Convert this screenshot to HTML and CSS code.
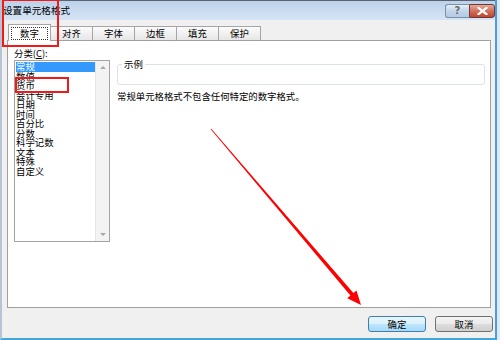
FILE: index.html
```html
<!DOCTYPE html>
<html lang="zh-CN">
<head>
<meta charset="utf-8">
<title>设置单元格格式</title>
<link rel="stylesheet" href="styles.css">
</head>
<body>
<div class="window">
  <div class="titlebar">
    <span class="title">设置单元格格式</span>
    <div class="caption">
      <span class="cap-help">?</span>
      <span class="cap-close"><svg width="11" height="8" viewBox="0 0 11 8"><path d="M1.5 0.8 L9.5 7.2 M9.5 0.8 L1.5 7.2" stroke="#fff" stroke-width="2.2" stroke-linecap="square"/></svg></span>
    </div>
  </div>
  <div class="tabs">
    <div class="tab active"><span class="focus">数字</span></div>
    <div class="tab">对齐</div>
    <div class="tab">字体</div>
    <div class="tab">边框</div>
    <div class="tab">填充</div>
    <div class="tab">保护</div>
  </div>
  <div class="panel">
    <div class="left">
      <div class="label">分类(<u>C</u>):</div>
      <div class="listbox">
        <ul class="items">
          <li class="sel">常规</li>
          <li>数值</li>
          <li>货币</li>
          <li>会计专用</li>
          <li>日期</li>
          <li>时间</li>
          <li>百分比</li>
          <li>分数</li>
          <li>科学记数</li>
          <li>文本</li>
          <li>特殊</li>
          <li>自定义</li>
        </ul>
        <div class="scrollbar">
          <span class="arr up"></span>
          <span class="arr down"></span>
        </div>
      </div>
    </div>
    <div class="right">
      <div class="sample"><span class="sample-label">示例</span></div>
      <p class="desc">常规单元格格式不包含任何特定的数字格式。</p>
    </div>
  </div>
  <div class="footer">
    <button class="btn default">确定</button>
    <button class="btn">取消</button>
  </div>
</div>
<div class="mark mark-tab"></div>
<div class="mark mark-item"></div>
<svg class="arrow" width="500" height="340" viewBox="0 0 500 340">
  <polygon points="211.3,128.7 353.4,293.0 356.5,290.4 361,305 347.3,298.2 350.4,295.6 210.7,129.3" fill="#ff0000"/>
</svg>
</body>
</html>
```
FILE: styles.css
```css
body {
  margin: 0;
  background: #dfe9f4;
  font-family: "Noto Sans CJK SC", "Noto Sans", sans-serif;
  font-size: 9.4px;
  color: #000;
}

.window {
  width: 497px;
  height: 340px;
  box-sizing: border-box;
  border-left: 2px solid #b6c5d6;
  border-right: 2px solid #4a9fd8;
  border-bottom: 2px solid #45a5d8;
  background: #f0f0f0;
  display: flex;
  flex-direction: column;
}

.titlebar {
  height: 20px;
  box-sizing: border-box;
  border-top: 1px solid #5a6470;
  background: linear-gradient(#bcd1e9, #d6e5f5);
  display: flex;
  align-items: flex-start;
  padding-left: 1px;
}

.title {
  line-height: 19px;
  font-size: 9.6px;
}

.caption {
  margin-left: auto;
  margin-top: 3px;
  display: flex;
}

.cap-help {
  width: 24px;
  height: 14px;
  box-sizing: border-box;
  border: 1px solid #7b8fa7;
  border-right: none;
  border-radius: 3px 0 0 3px;
  background: linear-gradient(#e6eff9, #c2d4ea 50%, #b3c9e3);
  color: #6b6b6b;
  font: bold 10px "DejaVu Sans", sans-serif;
  text-align: center;
  line-height: 12px;
}

.cap-close {
  width: 26px;
  height: 14px;
  box-sizing: border-box;
  border: 1px solid #6e3b34;
  border-radius: 0 3px 3px 0;
  background: linear-gradient(#e9a797, #d0705d 50%, #c3432e);
  display: flex;
  align-items: center;
  justify-content: center;
}

.tabs {
  display: flex;
  align-items: flex-end;
  height: 16px;
  margin: 4px 0 0 6px;
}

.tab {
  width: 43px;
  height: 14px;
  box-sizing: border-box;
  border: 1px solid #a5a5a5;
  border-bottom: none;
  background: linear-gradient(#fbfbfb, #e6e6e6);
  margin-left: -1px;
  text-align: center;
  line-height: 13px;
}

.tab.active {
  height: 17px;
  margin-left: 0;
  margin-bottom: -1px;
  background: #fff;
  position: relative;
  z-index: 1;
  padding-top: 2px;
}

.focus {
  display: block;
  margin: 0 2px;
  border: 1px dotted #333;
  line-height: 11px;
}

.panel {
  margin: 0 4px 0 5px;
  height: 268px;
  box-sizing: border-box;
  border: 1px solid #a0a0a0;
  background: #fff;
  display: flex;
  gap: 7px;
  padding: 5px 5px 0 6px;
}

.left {
  width: 96px;
  flex: none;
}

.label {
  line-height: 14px;
}

.listbox {
  height: 182px;
  box-sizing: border-box;
  border: 1px solid #a4a4a4;
  display: flex;
}

.items {
  flex: 1;
  list-style: none;
  margin: 0;
  padding: 1px 0 0 1px;
}

.items li {
  height: 9.5px;
  line-height: 9.5px;
  white-space: nowrap;
}

.items li.sel {
  background: #3399ff;
  color: #fff;
}

.scrollbar {
  width: 13px;
  background: #f3f3f3;
  border-left: 1px solid #e6e6e6;
  display: flex;
  flex-direction: column;
  justify-content: space-between;
  align-items: center;
  padding: 5px 0 5px;
}

.arr {
  width: 0;
  height: 0;
  border-left: 3px solid transparent;
  border-right: 3px solid transparent;
}

.arr.up {
  border-bottom: 3px solid #a8a8a8;
}

.arr.down {
  border-top: 3px solid #a8a8a8;
}

.right {
  flex: 1;
}

.sample {
  margin-top: 18px;
  height: 21px;
  box-sizing: border-box;
  border: 1px solid #dbe3e8;
  border-radius: 3px;
  position: relative;
}

.sample-label {
  position: absolute;
  top: -6px;
  left: 4px;
  padding: 0 2px;
  background: #fff;
  line-height: 11px;
}

.desc {
  margin: 5px 0 0;
  line-height: 12px;
}

.footer {
  display: flex;
  justify-content: flex-end;
  gap: 9px;
  margin-top: 8px;
  padding-right: 2px;
}

.btn {
  width: 58px;
  height: 16px;
  box-sizing: border-box;
  border: 1px solid #707070;
  border-radius: 3px;
  background: linear-gradient(#f3f3f3, #ebebeb 50%, #dddddd 51%, #cfcfcf);
  font: inherit;
  color: #000;
  padding: 0;
  line-height: 14px;
}

.btn.default {
  border-color: #3c7fb1;
  background: linear-gradient(#eaf6fd, #d9f0fc 50%, #bee6fd 51%, #a7d9f5);
}

.mark {
  position: absolute;
  box-sizing: border-box;
  border: 2px solid #f01a1a;
}

.mark-tab {
  left: 2px;
  top: -1px;
  width: 57px;
  height: 48px;
}

.mark-item {
  left: 15px;
  top: 77px;
  width: 54px;
  height: 16px;
}

.arrow {
  position: absolute;
  left: 0;
  top: 0;
  pointer-events: none;
}
```
